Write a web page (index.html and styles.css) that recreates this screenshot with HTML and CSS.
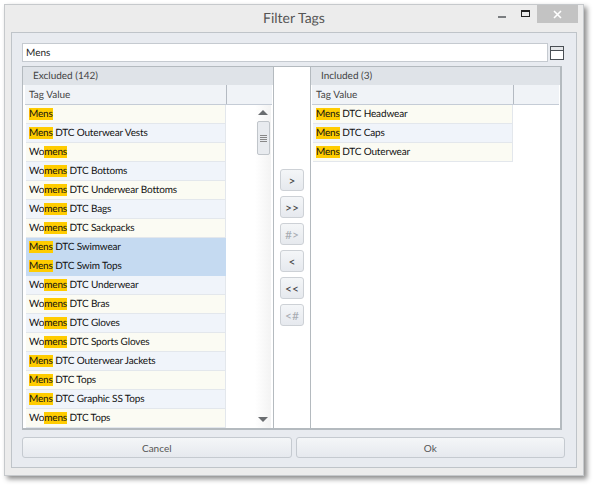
FILE: index.html
```html
<!DOCTYPE html>
<html lang="en">
<head>
<meta charset="utf-8"/>
<title>Filter Tags</title>
<link rel="stylesheet" href="styles.css">
</head>
<body>
<div class="window">
  <div class="titlebar">
    <span class="title">Filter Tags</span>
    <div class="win-buttons">
      <span class="win-min"></span>
      <span class="win-max"></span>
      <span class="win-close">
        <svg width="9" height="9" viewBox="0 0 9 9"><path d="M1 1l7 7M8 1l-7 7" stroke="#fff" stroke-width="1.6"/></svg>
      </span>
    </div>
  </div>
  <div class="content">
    <div class="search-row">
      <div class="search-input">Mens</div>
      <svg class="search-icon" width="16" height="15" viewBox="0 0 16 15"><rect x="1.5" y="1.5" width="13" height="13" fill="#fff" stroke="#4a4f55"/><rect x="2" y="2" width="12" height="3" fill="#e4e6e9"/><path d="M1.5 5.5h13" stroke="#4a4f55"/></svg>
    </div>
    <div class="lists">
      <div class="panel left">
        <div class="panel-head">Excluded (142)</div>
        <div class="col-head"><div class="col-name">Tag Value</div><div class="col-rest"></div></div>
        <div class="panel-body">
          <div class="rows">
            <div class="row"><mark>Mens</mark></div>
            <div class="row alt"><mark>Mens</mark> DTC Outerwear Vests</div>
            <div class="row">Wo<mark>mens</mark></div>
            <div class="row alt">Wo<mark>mens</mark> DTC Bottoms</div>
            <div class="row">Wo<mark>mens</mark> DTC Underwear Bottoms</div>
            <div class="row alt">Wo<mark>mens</mark> DTC Bags</div>
            <div class="row">Wo<mark>mens</mark> DTC Sackpacks</div>
            <div class="row sel"><mark>Mens</mark> DTC Swimwear</div>
            <div class="row sel"><mark>Mens</mark> DTC Swim Tops</div>
            <div class="row alt">Wo<mark>mens</mark> DTC Underwear</div>
            <div class="row">Wo<mark>mens</mark> DTC Bras</div>
            <div class="row alt">Wo<mark>mens</mark> DTC Gloves</div>
            <div class="row">Wo<mark>mens</mark> DTC Sports Gloves</div>
            <div class="row alt"><mark>Mens</mark> DTC Outerwear Jackets</div>
            <div class="row"><mark>Mens</mark> DTC Tops</div>
            <div class="row alt"><mark>Mens</mark> DTC Graphic SS Tops</div>
            <div class="row">Wo<mark>mens</mark> DTC Tops</div>
          </div>
          <div class="scrollbar">
            <span class="arrow-up"></span>
            <div class="track"><div class="thumb"><span class="grip"></span></div></div>
            <span class="arrow-down"></span>
          </div>
        </div>
      </div>
      <div class="move-col">
        <button class="move" type="button">&gt;</button>
        <button class="move" type="button">&gt;&gt;</button>
        <button class="move off" type="button">#&gt;</button>
        <button class="move" type="button">&lt;</button>
        <button class="move" type="button">&lt;&lt;</button>
        <button class="move off" type="button">&lt;#</button>
      </div>
      <div class="panel right">
        <div class="panel-head">Included (3)</div>
        <div class="col-head"><div class="col-name">Tag Value</div><div class="col-rest"></div></div>
        <div class="panel-body">
          <div class="rows">
            <div class="row"><mark>Mens</mark> DTC Headwear</div>
            <div class="row alt"><mark>Mens</mark> DTC Caps</div>
            <div class="row"><mark>Mens</mark> DTC Outerwear</div>
          </div>
        </div>
      </div>
    </div>
    <div class="actions">
      <button class="action" type="button">Cancel</button>
      <button class="action" type="button">Ok</button>
    </div>
  </div>
</div>
</body>
</html>
```

FILE: styles.css
```css
html, body {
    margin: 0;
    height: 100%;
    background-color: #fff;
}

body {
    padding: 4px 0 0 4px;
    box-sizing: border-box;
    font-family: Lato, "Liberation Sans", sans-serif;
    font-size: 10px;
    text-rendering: geometricPrecision;
    color: #222;
}

.window {
    width: 580px;
    height: 472px;
    box-sizing: border-box;
    display: flex;
    flex-direction: column;
    background-color: #ececec;
    border: 1px solid #c6c9cc;
    box-shadow: 3px 3px 5px rgba(0, 0, 0, 0.45);
    padding: 0 6px 7px;
}

.titlebar {
    height: 27px;
    display: flex;
    justify-content: center;
    padding-top: 4px;
    box-sizing: border-box;
    position: relative;
}

.title {
    font-size: 14px;
    line-height: 17px;
    color: #555;
}

.win-buttons {
    position: absolute;
    top: 0;
    right: -1px;
    display: flex;
    align-items: flex-start;
}

.win-min {
    width: 8px;
    height: 2px;
    margin: 11px 15px 0 0;
    background-color: #7a7d80;
}

.win-max {
    width: 7px;
    height: 4px;
    margin: 5px 7px 0 0;
    border: 1px solid #222;
    border-top-width: 2px;
}

.win-close {
    width: 41px;
    height: 18px;
    background-color: #c3c3c3;
    display: flex;
    align-items: center;
    justify-content: center;
}

.content {
    flex: 1;
    display: flex;
    flex-direction: column;
    background-color: #e8ebf0;
    border: 1px solid #bfc4c9;
    padding: 10px 11px 9px 10px;
}

.search-row {
    display: flex;
    align-items: center;
    gap: 1px;
}

.search-input {
    flex: 1;
    height: 19px;
    line-height: 19px;
    box-sizing: border-box;
    padding-left: 3px;
    background-color: #fff;
    border: 1px solid #c5cad0;
}

.search-icon {
    flex: none;
}

.lists {
    margin-top: 4px;
    height: 364px;
    width: 540px;
    display: flex;
    background-color: #fff;
    border: 1px solid #b4babf;
    border-width: 1px 2px 2px 1px;
    box-sizing: border-box;
}

.panel {
    display: flex;
    flex-direction: column;
    background-color: #fff;
}

.panel.left {
    width: 251px;
    flex: none;
    border-right: 1px solid #b4babf;
    box-sizing: border-box;
}

.panel.right {
    flex: 1;
    border-left: 1px solid #b4babf;
}

.panel-head {
    height: 18px;
    line-height: 19px;
    padding-left: 10px;
    background-color: #dfe3e8;
    color: #444;
}

.col-head {
    height: 19px;
    margin: 0 1px;
    display: flex;
    background-color: #f0f3f7;
    border-bottom: 1px solid #c5ccd6;
}

.left .col-head {
    margin-left: 2px;
}

.col-name {
    width: 197px;
    padding-left: 4px;
    line-height: 20px;
    border-right: 1px solid #b4bac2;
    color: #444;
}

.panel-body {
    flex: 1;
    display: flex;
    min-height: 0;
}

.rows {
    width: 200px;
    flex: none;
    margin-left: 3px;
}

.right .rows {
    margin-left: 2px;
}

.row {
    height: 18px;
    line-height: 19px;
    padding-left: 3px;
    letter-spacing: -0.15px;
    color: #111;
    background-color: #fbfbf3;
    border-bottom: 1px solid #e3e7ec;
    border-right: 1px solid #e3e7ec;
    white-space: nowrap;
}

.row.alt {
    background-color: #f0f4fa;
}

.row.sel {
    background-color: #c5daf1;
    border-bottom-color: #c5daf1;
    border-right-color: #c5daf1;
}

mark {
    background-color: #ffcc00;
    color: inherit;
}

.scrollbar {
    margin: 0 2px 0 auto;
    width: 16px;
    padding: 5px 0 6px;
    display: flex;
    flex-direction: column;
    align-items: center;
    background: linear-gradient(90deg, #fff, #f3f3f3);
}

.arrow-up {
    border: 5px solid transparent;
    border-top: 0;
    border-bottom: 5px solid #6a6d70;
}

.arrow-down {
    border: 5px solid transparent;
    border-bottom: 0;
    border-top: 5px solid #6a6d70;
}

.track {
    flex: 1;
    width: 100%;
    padding-top: 6px;
    display: flex;
    justify-content: center;
}

.thumb {
    width: 13px;
    height: 34px;
    box-sizing: border-box;
    background-color: #e8ebef;
    border: 1px solid #c0c5ca;
    border-radius: 2px;
    display: flex;
    align-items: center;
    justify-content: center;
}

.grip {
    width: 7px;
    height: 7px;
    background: repeating-linear-gradient(#888 0, #888 1px, transparent 1px, transparent 2px);
}

.move-col {
    flex: none;
    width: 36px;
    box-sizing: border-box;
    padding: 102px 0 0 6px;
    display: flex;
    flex-direction: column;
    align-items: flex-start;
    gap: 5px;
    background-color: #fff;
}

.move {
    width: 24px;
    height: 22px;
    padding: 0;
    font-family: inherit;
    font-size: 12px;
    color: #444;
    background: linear-gradient(#f4f6f8, #e6e9ee);
    border: 1px solid #cdd1d6;
    border-radius: 3px;
}

.move.off {
    color: #a8acb2;
}

.actions {
    margin-top: 7px;
    display: flex;
    gap: 4px;
}

.action {
    flex: 1;
    height: 21px;
    padding: 0;
    font-family: inherit;
    font-size: 10px;
    color: #555;
    background: linear-gradient(#f4f6f8, #e6e9ee);
    border: 1px solid #c5cad0;
    border-radius: 3px;
}
```
